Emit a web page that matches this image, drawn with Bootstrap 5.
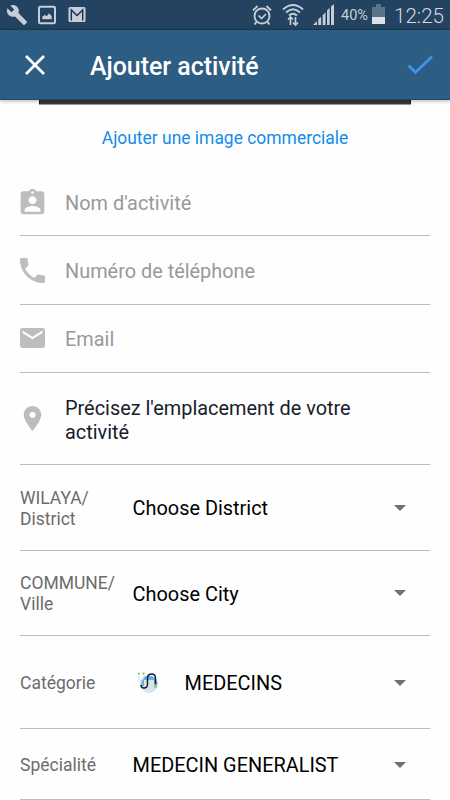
<!DOCTYPE html>
<html lang="fr">
<head>
<meta charset="utf-8">
<meta name="viewport" content="width=device-width, initial-scale=1">
<title>Ajouter activité</title>
<link href="https://cdn.jsdelivr.net/npm/bootstrap@5.3.0/dist/css/bootstrap.min.css" rel="stylesheet">
<style>
body{font-family:Roboto,sans-serif;background:#fefefe;height:800px;overflow:hidden;color:#000}
svg{display:block;flex:none}
.statusbar{height:30px;background:#234360;color:#c4ced8;padding:0 6px 0 6px;border-bottom:1px solid #1f3b54}
.statusbar .pct{font-size:14.500px;line-height:30px;margin-left:7px;padding-top:2px}
.statusbar .clock{font-size:20.600px;line-height:30px;font-weight:300;color:#d2dae2;margin-left:9px;padding-top:2px}
.wifi{margin-left:10px}.signal{margin-left:9px}.battery{margin-left:4px}.picture{margin-left:10px}.mail{margin-left:12px}
.appbar{height:70px;background:#2e5d83;border-bottom:1px solid #134a78;box-shadow:0 1px 4px rgba(0,0,0,.3);padding:0 17px 0 24px}
.appbar h1{font-size:24.900px;font-weight:500;line-height:30px;margin:4px 0 0 44px;color:#fff}
.banner{width:372px;height:4px;background:#393838;border:solid #111;border-width:0 1px;box-shadow:0 1px #999;position:relative}
.add-image{height:64px;color:#128bea;font-size:17.450px;padding-top:4px}
.form-line{border-bottom:1px solid #bdbdbd;font-size:19.900px;line-height:24px;margin:0 20px}
.form-line .glyph{width:45px;color:#bdbdbd}
.form-line span{position:relative;top:2px}
.hint{color:#999}
.place{color:#17202c;width:300px}
.caption-text{width:112.600px;font-size:17.500px;line-height:21px;color:#6c6c6c;padding-top:3px}
.caret{width:0;height:0;border:solid transparent;border-width:6px 6.500px 0;border-top-color:#707070;margin:1px 24px 0 auto}
.stethoscope{margin:0 27px 0 4px}
.h-field{height:68.400px}.h-place{height:92px}.h-pick{height:85.500px}.h-cat{height:93px}.h-spec{height:71px}
</style>
</head>
<body class="d-flex flex-column">
<div class="statusbar d-flex align-items-center flex-shrink-0">
  <svg width="22" height="22" viewBox="0 0 24 24" fill="#c4ced8"><path d="M22.7 19l-9.100-9.100c.9-2.300.4-5-1.500-6.900-2-2-5-2.400-7.400-1.300L9 6 6 9 1.600 4.700C.4 7.100.9 10.100 2.900 12.100c1.900 1.900 4.600 2.400 6.900 1.500l9.100 9.100c.4.4 1 .4 1.400 0l2.300-2.300c.5-.4.5-1.100.1-1.400z"/></svg>
  <svg class="picture" width="18" height="20" viewBox="0 0 18 20"><rect x="1" y="1.800" width="16" height="16.500" rx="1.200" fill="#234360" stroke="#c4ced8" stroke-width="2"/><path d="M4 14.500v-3l3-2 1.500 1.500 2.500-3 3 3v3.500z" fill="#c4ced8" stroke="#1b2e50" stroke-width=".5"/></svg>
  <svg class="mail" width="18" height="17" viewBox="0 0 19 17" preserveAspectRatio="none"><rect x=".5" y="1" width="18" height="15" rx="1.500" fill="#c4ced8"/><path d="M3.500 14.500V4l6 5.500 6-5.500v10.500" fill="none" stroke="#1b2e50" stroke-width="1.500"/></svg>
  <svg class="ms-auto" width="20" height="22" viewBox="0 0 20 22" fill="none" stroke="#c4ced8" stroke-width="1.900"><circle cx="10" cy="12" r="7.500"/><path d="M1 6.500L5.500 2M19 6.500L14.500 2M4.500 18L2.500 20.500M15.500 18l2 2.500"/><path d="M6.500 11.500l3 3 4.500-4.500" stroke-width="1.600"/></svg>
  <svg class="wifi" width="22" height="24" viewBox="0 0 22 24" fill="none" stroke="#c4ced8" stroke-width="2"><path d="M1 6.500Q11-2.500 21 6.500M4 9.500Q11 3 18 9.500M7 12.500q4-3.600 8 0"/><path d="M8.500 22v-8M6 16.500L8.500 14l2.500 2.500M13.500 14v8M11 19.500l2.500 2.500 2.500-2.500" stroke-width="1.700"/></svg>
  <svg class="signal" width="21" height="21" viewBox="0 0 21 21"><path d="M4 17L21 0v21H4z" fill="#1b2e50"/><path d="M0 21l4-4v4zM5.200 21v-5.500l3-3V21zM9.600 21v-9.800l3-3V21zM14 21V6.500l2.700-2.700V21zM18 21V2.500L21 0v21z" fill="#c4ced8"/></svg>
  <span class="pct">40%</span>
  <svg class="battery" width="13" height="21" viewBox="0 0 13 21"><path d="M4 0h5v3h4v10H0V3h4z" fill="#5b7489"/><path d="M0 13h13v7H0z" fill="#dbe1e6"/></svg>
  <span class="clock">12:25</span>
</div>
<header class="appbar d-flex align-items-center flex-shrink-0 z-1">
  <svg width="22" height="22" viewBox="0 0 22 22" stroke="#fff" stroke-width="2.700"><path d="M2 2l18 18M20 2L2 20"/></svg>
  <h1>Ajouter activité</h1>
  <svg class="ms-auto" width="26" height="20" viewBox="0 0 26 20" fill="none" stroke="#3897f0" stroke-width="2.600"><path d="M1.500 10.500l7 7L25 1.500"/></svg>
</header>
<main>
  <div class="banner mx-auto"></div>
  <div class="add-image d-flex align-items-center justify-content-center"><span>Ajouter une image commerciale</span></div>
  <div class="form-line h-field d-flex align-items-center">
    <div class="glyph"><svg width="25" height="27" viewBox="2.500 .500 19 21" preserveAspectRatio="none" fill="currentColor"><path d="M19 3h-4.180C14.400 1.840 13.300 1 12 1s-2.400.840-2.820 2H5c-1.100 0-2 .9-2 2v14c0 1.100.9 2 2 2h14c1.100 0 2-.9 2-2V5c0-1.100-.9-2-2-2zm-7 0c.550 0 1 .450 1 1s-.450 1-1 1-1-.450-1-1 .450-1 1-1zm0 4c1.660 0 3 1.340 3 3s-1.340 3-3 3-3-1.340-3-3 1.340-3 3-3zm6 12H6v-1.400c0-2 4-3.100 6-3.100s6 1.100 6 3.100V19z"/></svg></div>
    <span class="hint">Nom d'activité</span>
  </div>
  <div class="form-line h-field d-flex align-items-center">
    <div class="glyph"><svg width="25" height="25" viewBox="3 3 18 18" fill="currentColor"><path d="M6.620 10.790c1.440 2.830 3.760 5.140 6.590 6.590l2.200-2.200c.270-.270.670-.360 1.020-.240 1.120.370 2.330.570 3.570.570.550 0 1 .450 1 1V20c0 .550-.450 1-1 1-9.390 0-17-7.610-17-17 0-.550.450-1 1-1h3.500c.550 0 1 .450 1 1 0 1.250.200 2.450.570 3.570.110.350.030.740-.250 1.020l-2.200 2.200z"/></svg></div>
    <span class="hint">Numéro de téléphone</span>
  </div>
  <div class="form-line h-field d-flex align-items-center">
    <div class="glyph"><svg width="25" height="20" viewBox="2 4 20 16" fill="currentColor"><path d="M20 4H4c-1.100 0-1.990.9-1.990 2L2 18c0 1.100.9 2 2 2h16c1.100 0 2-.9 2-2V6c0-1.100-.9-2-2-2zm0 4l-8 5-8-5V6l8 5 8-5v2z"/></svg></div>
    <span class="hint">Email</span>
  </div>
  <div class="form-line h-place d-flex align-items-center">
    <div class="glyph"><svg width="25" height="25" viewBox="2 2 20 20" fill="currentColor"><path d="M12 2C8.130 2 5 5.130 5 9c0 5.250 7 13 7 13s7-7.750 7-13c0-3.870-3.130-7-7-7zm0 9.500c-1.380 0-2.500-1.120-2.500-2.500s1.120-2.500 2.500-2.500 2.500 1.120 2.500 2.500-1.120 2.500-2.500 2.500z"/></svg></div>
    <span class="place">Précisez l'emplacement de votre activité</span>
  </div>
  <div class="form-line h-pick d-flex align-items-center">
    <div class="caption-text">WILAYA/<br>District</div><span>Choose District</span><i class="caret"></i>
  </div>
  <div class="form-line h-pick d-flex align-items-center">
    <div class="caption-text">COMMUNE/<br>Ville</div><span>Choose City</span><i class="caret"></i>
  </div>
  <div class="form-line h-cat d-flex align-items-center">
    <div class="caption-text">Catégorie</div>
    <svg class="stethoscope" width="21" height="21" viewBox="0 0 21 21" fill="none"><circle cx="12" cy="12" r="8.500" fill="#69afe0"/><path d="M4 14h16q-2 7-8 7t-8-7z" fill="#d8e8ef"/><path d="M7 8h10v10H7z" fill="#dce3e8"/><path d="M1.500 1v4q0 3.500 2.500 3.500T7 5V1M4 8v5" stroke="#d7dde0" stroke-width="1"/><path d="M4 13q0 3 3 3 3.500 0 3.500-4V6q0-4 4-4t4 4v6" stroke="#14242f" stroke-width="1.500"/><circle cx="2" cy="1.500" r="1" fill="#60c85a"/><circle cx="6.500" cy="1.500" r="1" fill="#60c85a"/><circle cx="18.500" cy="14.500" r="1.600" fill="#9bc98a"/></svg>
    <span>MEDECINS</span><i class="caret"></i>
  </div>
  <div class="form-line h-spec d-flex align-items-center">
    <div class="caption-text">Spécialité</div><span>MEDECIN GENERALIST</span><i class="caret"></i>
  </div>
</main>
<script src="https://cdn.jsdelivr.net/npm/bootstrap@5.3.0/dist/js/bootstrap.bundle.min.js"></script>
</body>
</html>
